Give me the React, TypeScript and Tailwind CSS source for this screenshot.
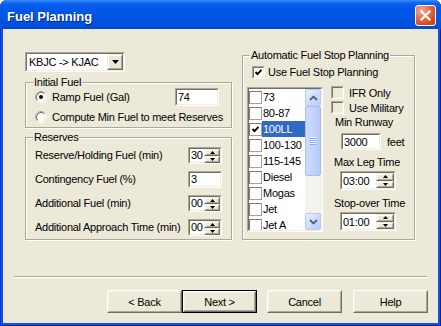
import React from "react";

type Kids = { className?: string; inner?: string; children?: React.ReactNode };

function Sunken({ className = "", inner = "bg-white", children }: Kids) {
  return (
    <div className={`border border-t-[#ACA899] border-l-[#ACA899] border-b-white border-r-white ${className}`}>
      <div className={`w-full h-full border border-t-[#716F64] border-l-[#716F64] border-b-[#F1EFE2] border-r-[#F1EFE2] ${inner}`}>
        {children}
      </div>
    </div>
  );
}

function SmallRaised({ className = "", children }: Kids) {
  return (
    <div className={`border border-t-[#F1EFE2] border-l-[#F1EFE2] border-b-[#716F64] border-r-[#716F64] ${className}`}>
      <div className="w-full h-full border border-t-white border-l-white border-b-[#ACA899] border-r-[#ACA899] bg-[#ECE9D8] flex items-center justify-center">
        {children}
      </div>
    </div>
  );
}

function Group({ label, className = "", children }: { label: string; className?: string; children?: React.ReactNode }) {
  return (
    <div className={`relative border border-[#ACA899] shadow-[inset_1px_1px_0_#fff,1px_1px_0_#fff] ${className}`}>
      <span className="absolute left-[7px] top-[-8px] bg-[#ECE9D8] px-[1px] leading-[14px] whitespace-nowrap">{label}</span>
      {children}
    </div>
  );
}

function Radio({ checked }: { checked?: boolean }) {
  return (
    <svg width="12" height="12" viewBox="0 0 12 12" className="shrink-0">
      <circle cx="6" cy="6" r="4" fill="#fff" />
      <path d="M2.11 9.89 A5.5 5.5 0 0 1 9.89 2.11" stroke="#ACA899" fill="none" />
      <path d="M9.89 2.11 A5.5 5.5 0 0 1 2.11 9.89" stroke="#fff" fill="none" />
      <path d="M2.82 9.18 A4.5 4.5 0 0 1 9.18 2.82" stroke="#716F64" fill="none" />
      <path d="M9.18 2.82 A4.5 4.5 0 0 1 2.82 9.18" stroke="#F1EFE2" fill="none" />
      {checked && <circle cx="6" cy="6" r="2" fill="#000" />}
    </svg>
  );
}

function CheckMark() {
  return (
    <svg width="9" height="9" viewBox="0 0 9 9">
      <polyline points="1.5,4 3.5,6.2 7.5,1.8" fill="none" stroke="#000" strokeWidth="1.9" />
    </svg>
  );
}

function Check({ checked, inner = "bg-white" }: { checked?: boolean; inner?: string }) {
  return (
    <Sunken className="w-[13px] h-[13px] shrink-0" inner={`${inner} flex items-center justify-center`}>
      {checked && <CheckMark />}
    </Sunken>
  );
}

function ListCheck({ checked }: { checked?: boolean }) {
  return (
    <div className="w-[13px] h-[13px] shrink-0 border border-t-[#7A7A7A] border-l-[#7A7A7A] border-b-[#A0A0A0] border-r-[#A0A0A0] bg-white flex items-center justify-center">
      {checked && <CheckMark />}
    </div>
  );
}

function Arrow({ up }: { up?: boolean }) {
  return (
    <svg width="5" height="3" viewBox="0 0 5 3">
      {up ? <polygon points="0,3 5,3 2.5,0" fill="#000" /> : <polygon points="0,0 5,0 2.5,3" fill="#000" />}
    </svg>
  );
}

function Spin({ value, size, btn = "w-[16px]" }: { value: string; size: string; btn?: string }) {
  return (
    <Sunken className={size} inner="bg-white flex">
      <div className="flex-1 flex items-center pl-[1px] whitespace-nowrap">{value}</div>
      <div className={`flex flex-col ${btn}`}>
        <SmallRaised className="flex-1">
          <Arrow up />
        </SmallRaised>
        <SmallRaised className="flex-1">
          <Arrow />
        </SmallRaised>
      </div>
    </Sunken>
  );
}

function Edit({ value, size }: { value: string; size: string }) {
  return (
    <Sunken className={size} inner="bg-white flex items-center pl-[1px]">
      {value}
    </Sunken>
  );
}

function ScrollBtn({ up }: { up?: boolean }) {
  return (
    <div className="h-[17px] w-full shrink-0 rounded-[2px] border border-[#B9CBF3] bg-[linear-gradient(135deg,#E8EFFF_0%,#CCDBFC_55%,#B7CAF8_100%)] flex items-center justify-center">
      <svg width="9" height="6" viewBox="0 0 9 6">
        {up ? (
          <polyline points="1,5 4.5,1.5 8,5" fill="none" stroke="#4D6185" strokeWidth="1.8" />
        ) : (
          <polyline points="1,1 4.5,4.5 8,1" fill="none" stroke="#4D6185" strokeWidth="1.8" />
        )}
      </svg>
    </div>
  );
}

function ScrollBar() {
  return (
    <div className="w-[16px] h-full flex flex-col bg-[#F4F3EE]">
      <ScrollBtn up />
      <div className="h-[70px] w-full rounded-[2px] border border-[#A9BEEE] bg-[linear-gradient(to_right,#CCDAFD_0%,#C3D4FC_50%,#B5C9F8_100%)] flex flex-col items-center justify-center gap-0">
        <div className="w-[6px] h-[1px] bg-[#EEF4FF]" />
        <div className="w-[6px] h-[1px] bg-[#8DA9E6]" />
        <div className="w-[6px] h-[1px] bg-[#EEF4FF]" />
        <div className="w-[6px] h-[1px] bg-[#8DA9E6]" />
        <div className="w-[6px] h-[1px] bg-[#EEF4FF]" />
        <div className="w-[6px] h-[1px] bg-[#8DA9E6]" />
        <div className="w-[6px] h-[1px] bg-[#EEF4FF]" />
        <div className="w-[6px] h-[1px] bg-[#8DA9E6]" />
      </div>
      <div className="flex-1" />
      <ScrollBtn />
    </div>
  );
}

function Btn({ label, def }: { label: string; def?: boolean }) {
  const body = (
    <div className="w-full h-full border border-t-white border-l-white border-b-[#716F64] border-r-[#716F64]">
      <div className="w-full h-full border border-t-[#F1EFE2] border-l-[#F1EFE2] border-b-[#ACA899] border-r-[#ACA899] bg-[#ECE9D8] flex items-center justify-center">
        {label}
      </div>
    </div>
  );
  return def ? (
    <div className="w-[75px] h-[23px] border border-black">{body}</div>
  ) : (
    <div className="w-[75px] h-[23px]">{body}</div>
  );
}

const fuels = ["73", "80-87", "100LL", "100-130", "115-145", "Diesel", "Mogas", "Jet", "Jet A"];

export default function App() {
  return (
    <div className="w-[441px] h-[326px] bg-white font-['Liberation_Sans',Arial,sans-serif] text-[11px] leading-[14px] tracking-[-0.25px] text-black">
      <div className="w-full h-full flex flex-col rounded-t-[7px] overflow-hidden bg-[#0A55E2] shadow-[inset_1px_0_0_#0831D9,inset_-1px_0_0_#0020A8,inset_0_-1px_0_#0020A8]">
        {/* Title bar */}
        <div className="h-[29px] shrink-0 flex items-start bg-[linear-gradient(to_bottom,#3D91FF_0%,#1A6EF5_7%,#0A5FEC_14%,#0058E8_30%,#0055E4_60%,#0051DE_85%,#0046CC_100%)]">
          <div className="mt-[9px] ml-[7px] text-white font-bold text-[13px] leading-[15px] tracking-[0px] [text-shadow:1px_1px_0_#0A1E8A]">
            Fuel Planning
          </div>
          <div className="ml-auto mr-[5px] mt-[5px] w-[21px] h-[21px] rounded-[3px] border border-white bg-[radial-gradient(circle_at_30%_25%,#F4AE94_0%,#E4704B_40%,#D0481F_75%,#C23C16_100%)] flex items-center justify-center">
            <svg width="11" height="11" viewBox="0 0 11 11">
              <path d="M1.5 1.5 L9.5 9.5 M9.5 1.5 L1.5 9.5" stroke="#fff" strokeWidth="2.2" strokeLinecap="square" />
            </svg>
          </div>
        </div>

        {/* Client */}
        <div className="flex-1 mx-[3px] mb-[3px] bg-[#ECE9D8] flex flex-col">
          <div className="flex pl-[22px] pt-[23px] gap-[10px]">
            {/* Left column */}
            <div className="w-[207px] flex flex-col">
              <Sunken className="w-[100px] h-[20px]" inner="bg-white flex items-center">
                <div className="flex-1 pl-[2px] whitespace-nowrap">KBJC -&gt; KJAC</div>
                <SmallRaised className="w-[16px] h-full">
                  <svg width="7" height="4" viewBox="0 0 7 4">
                    <polygon points="0,0 7,0 3.5,4" fill="#000" />
                  </svg>
                </SmallRaised>
              </Sunken>

              <Group label="Initial Fuel" className="mt-[10px] h-[46px]">
                <div className="mt-[5px] h-[18px] flex items-center pl-[9px] pr-[12px]">
                  <Radio checked />
                  <span className="ml-[5px]">Ramp Fuel (Gal)</span>
                  <div className="flex-1" />
                  <Edit value="74" size="w-[44px] h-[18px]" />
                </div>
                <div className="mt-[4px] h-[14px] flex items-center pl-[9px]">
                  <Radio />
                  <span className="ml-[5px] whitespace-nowrap">Compute Min Fuel to meet Reserves</span>
                </div>
              </Group>

              <Group label="Reserves" className="mt-[9px] h-[103px]">
                <div className="pt-[5px] flex flex-col">
                  <div className="h-[24px] flex items-center pl-[9px] pr-[9px]">
                    <span>Reserve/Holding Fuel (min)</span>
                    <div className="flex-1" />
                    <Spin value="30" size="w-[34px] h-[17px]" />
                  </div>
                  <div className="h-[24px] flex items-center pl-[9px] pr-[9px]">
                    <span>Contingency Fuel (%)</span>
                    <div className="flex-1" />
                    <Edit value="3" size="w-[34px] h-[17px]" />
                  </div>
                  <div className="h-[24px] flex items-center pl-[9px] pr-[9px]">
                    <span>Additional Fuel (min)</span>
                    <div className="flex-1" />
                    <Spin value="00" size="w-[34px] h-[17px]" />
                  </div>
                  <div className="h-[24px] flex items-center pl-[9px] pr-[9px]">
                    <span className="whitespace-nowrap">Additional Approach Time (min)</span>
                    <div className="flex-1" />
                    <Spin value="00" size="w-[34px] h-[17px]" />
                  </div>
                </div>
              </Group>
            </div>

            {/* Right column */}
            <Group label="Automatic Fuel Stop Planning" className="mt-[3px] w-[173px] h-[185px]">
              <div className="mt-[9px] ml-[9px] h-[14px] flex items-center">
                <Check checked />
                <span className="ml-[3px]">Use Fuel Stop Planning</span>
              </div>
              <div className="mt-[8px] flex">
                <Sunken className="ml-[4px] w-[76px] h-[145px]" inner="bg-white flex">
                  <div className="flex-1 min-w-0 flex flex-col overflow-hidden">
                    {fuels.map((f, i) => (
                      <div key={f} className="h-[16px] shrink-0 flex items-center">
                        <ListCheck checked={i === 2} />
                        <div
                          className={
                            i === 2
                              ? "flex-1 h-full flex items-center pl-[1px] bg-[#316AC5] text-white whitespace-nowrap"
                              : "flex-1 h-full flex items-center pl-[1px] whitespace-nowrap"
                          }
                        >
                          {f}
                        </div>
                      </div>
                    ))}
                  </div>
                  <ScrollBar />
                </Sunken>
                <div className="ml-[8px] flex flex-col">
                  <div className="mt-[-1px] h-[13px] flex items-center">
                    <Check inner="bg-[#ECE9D8]" />
                    <span className="ml-[5px] whitespace-nowrap">IFR Only</span>
                  </div>
                  <div className="mt-[2px] h-[13px] flex items-center">
                    <Check inner="bg-[#ECE9D8]" />
                    <span className="ml-[5px] whitespace-nowrap">Use Military</span>
                  </div>
                  <div className="mt-[1px] h-[14px] ml-[4px] flex items-center whitespace-nowrap">Min Runway</div>
                  <div className="mt-[4px] ml-[10px] flex items-center">
                    <Edit value="3000" size="w-[40px] h-[17px]" />
                    <span className="ml-[6px]">feet</span>
                  </div>
                  <div className="mt-[5px] h-[14px] ml-[3px] flex items-center whitespace-nowrap">Max Leg Time</div>
                  <div className="mt-[2px] ml-[9px]">
                    <Spin value="03:00" size="w-[56px] h-[19px]" btn="w-[18px]" />
                  </div>
                  <div className="mt-[6px] h-[14px] ml-[3px] flex items-center whitespace-nowrap">Stop-over Time</div>
                  <div className="mt-[2px] ml-[9px]">
                    <Spin value="01:00" size="w-[56px] h-[19px]" btn="w-[18px]" />
                  </div>
                </div>
              </div>
            </Group>
          </div>

          <div className="mt-[36px] mx-[11px] h-[2px] border-t border-t-[#ACA899] border-b border-b-white" />

          <div className="mt-[12px] flex justify-end pr-[10px]">
            <Btn label="< Back" />
            <Btn label="Next >" def />
            <div className="ml-[10px]">
              <Btn label="Cancel" />
            </div>
            <div className="ml-[11px]">
              <Btn label="Help" />
            </div>
          </div>
        </div>
      </div>
    </div>
  );
}
